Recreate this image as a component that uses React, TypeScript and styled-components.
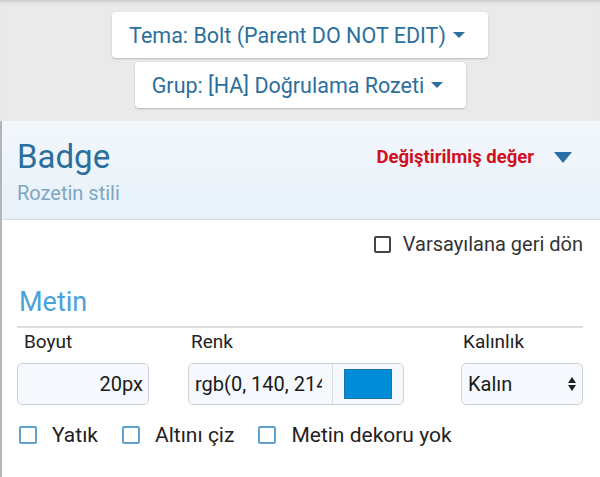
import React from 'react';
import styled, { createGlobalStyle } from 'styled-components';

const GlobalStyle = createGlobalStyle`
  html, body {
    margin: 0;
    padding: 0;
    background: #fff;
  }
  body {
    font-family: Roboto, "Noto Sans", sans-serif;
    width: 600px;
    height: 477px;
    overflow: hidden;
  }
`;

const Page = styled.div`
  width: 600px;
  height: 477px;
  display: flex;
  flex-direction: column;
`;

const TopBar = styled.div`
  background: #eaeaea;
  box-shadow: inset 0 4px 4px -3px rgba(0, 0, 0, 0.18);
  display: flex;
  flex-direction: column;
  align-items: center;
  gap: 4px;
  padding: 12px 0 13px;
`;

const MenuButton = styled.button<{ $shift: number }>`
  display: flex;
  align-items: center;
  gap: 7px;
  height: 46px;
  padding: 0 23px 0 17px;
  margin-left: ${p => p.$shift}px;
  background: #fff;
  border: none;
  border-radius: 4px;
  box-shadow: 0 1px 2px rgba(0, 0, 0, 0.22);
  font-family: Roboto, sans-serif;
  font-size: 21.5px;
  color: #2d6f9c;
`;

const Caret = styled.span<{ $w: number; $h: number; $color: string }>`
  width: 0;
  height: 0;
  border-left: ${p => p.$w / 2}px solid transparent;
  border-right: ${p => p.$w / 2}px solid transparent;
  border-top: ${p => p.$h}px solid ${p => p.$color};
`;

const Panel = styled.div`
  flex: 1;
  border-left: 2px solid #b5b5b5;
  display: flex;
  flex-direction: column;
`;

const Header = styled.div`
  display: flex;
  justify-content: space-between;
  align-items: flex-start;
  padding: 16px 28px 14px 15px;
  background: linear-gradient(#f2f7fc, #e8f1f9);
  border-bottom: 1px solid #d6dde3;
`;

const TitleBlock = styled.div`
  display: flex;
  flex-direction: column;
`;

const Title = styled.div`
  font-size: 33px;
  line-height: 40px;
  color: #2b6f9f;
`;

const Subtitle = styled.div`
  font-size: 20px;
  line-height: 24px;
  margin-top: 4px;
  color: #7ea6c3;
`;

const Modified = styled.div`
  display: flex;
  align-items: center;
  gap: 20px;
  margin-top: 9px;
  font-size: 18.5px;
  line-height: 22px;
  font-weight: 700;
  color: #d0101c;
`;

const Body = styled.div`
  padding: 12px 17px 0 15px;
  display: flex;
  flex-direction: column;
`;

const ResetRow = styled.label`
  align-self: flex-end;
  display: flex;
  align-items: center;
  gap: 12px;
  font-size: 20px;
  line-height: 24px;
  color: #333;
`;

const Box = styled.span<{ $color: string; $size: number }>`
  width: ${p => p.$size}px;
  height: ${p => p.$size}px;
  box-sizing: border-box;
  border: 2px solid ${p => p.$color};
  border-radius: 2px;
  background: #fff;
`;

const SectionTitle = styled.div`
  margin-top: 28px;
  padding: 0 0 6px 2px;
  font-size: 27px;
  line-height: 36px;
  color: #4aa2dc;
  border-bottom: 2px solid #dcdcdc;
`;

const FieldGrid = styled.div`
  display: grid;
  grid-template-columns: 132px 216px 1fr;
  column-gap: 39px;
  margin-top: 3px;
`;

const Field = styled.div<{ $width?: number }>`
  display: flex;
  flex-direction: column;
  gap: 10px;
  justify-self: end;
  width: ${p => (p.$width ? `${p.$width}px` : '100%')};
`;

const Label = styled.div<{ $indent: number }>`
  font-size: 19px;
  line-height: 22px;
  padding-left: ${p => p.$indent}px;
  color: #222;
`;

const InputShell = styled.div`
  height: 42px;
  box-sizing: border-box;
  display: flex;
  align-items: center;
  background: #f5f9fd;
  border: 1px solid #cfd3d7;
  border-radius: 5px;
  font-size: 20px;
  color: #1a1a1a;
  overflow: hidden;
`;

const TextInput = styled.input<{ $align: 'left' | 'right'; $width?: number }>`
  ${p => (p.$width ? `width: ${p.$width}px; flex: none;` : 'flex: 1; min-width: 0;')}
  height: 100%;
  box-sizing: border-box;
  padding: ${p => (p.$align === 'right' ? '0 5px 0 6px' : '0 10px 0 6px')};
  border: none;
  background: transparent;
  font-family: Roboto, sans-serif;
  font-size: 20px;
  color: #1a1a1a;
  text-align: ${p => p.$align};
  outline: none;
`;

const SwatchCell = styled.div`
  flex: 1;
  height: 100%;
  display: flex;
  align-items: center;
  justify-content: center;
  border-left: 1px solid #dadde0;
`;

const Swatch = styled.div<{ $color: string }>`
  width: 48px;
  height: 30px;
  background: ${p => p.$color};
  border: 1px solid #1a72ad;
  box-sizing: border-box;
`;

const SelectText = styled.div`
  flex: 1;
  padding-left: 6px;
`;

const UpDown = styled.div`
  display: flex;
  flex-direction: column;
  gap: 2px;
  margin-right: 6px;
`;

const Tri = styled.span<{ $up?: boolean }>`
  width: 0;
  height: 0;
  border-left: 4px solid transparent;
  border-right: 4px solid transparent;
  ${p => (p.$up ? 'border-bottom: 6px solid #222;' : 'border-top: 6px solid #222;')}
`;

const OptionRow = styled.div`
  display: flex;
  align-items: center;
  margin-top: 18px;
  padding-left: 2px;
  gap: 24px;
  font-size: 21px;
  line-height: 24px;
  color: #222;
`;

const Option = styled.label`
  display: flex;
  align-items: center;
  gap: 15px;
`;

export default function App() {
  const color = 'rgb(0, 140, 214)';
  return (
    <Page>
      <GlobalStyle />
      <TopBar>
        <MenuButton $shift={0}>
          Tema: Bolt (Parent DO NOT EDIT)
          <Caret $w={12} $h={6} $color="#2d6f9c" />
        </MenuButton>
        <MenuButton $shift={1}>
          Grup: [HA] Doğrulama Rozeti
          <Caret $w={12} $h={6} $color="#2d6f9c" />
        </MenuButton>
      </TopBar>
      <Panel>
        <Header>
          <TitleBlock>
            <Title>Badge</Title>
            <Subtitle>Rozetin stili</Subtitle>
          </TitleBlock>
          <Modified>
            Değiştirilmiş değer
            <Caret $w={19} $h={11} $color="#2a6ea8" />
          </Modified>
        </Header>
        <Body>
          <ResetRow>
            <Box $color="#444" $size={17} />
            Varsayılana geri dön
          </ResetRow>
          <SectionTitle>Metin</SectionTitle>
          <FieldGrid>
            <Field>
              <Label $indent={7}>Boyut</Label>
              <InputShell>
                <TextInput $align="right" readOnly value="20px" />
              </InputShell>
            </Field>
            <Field>
              <Label $indent={3}>Renk</Label>
              <InputShell>
                <TextInput $align="left" $width={143} readOnly value={color} />
                <SwatchCell>
                  <Swatch $color={color} />
                </SwatchCell>
              </InputShell>
            </Field>
            <Field $width={122}>
              <Label $indent={2}>Kalınlık</Label>
              <InputShell>
                <SelectText>Kalın</SelectText>
                <UpDown>
                  <Tri $up />
                  <Tri />
                </UpDown>
              </InputShell>
            </Field>
          </FieldGrid>
          <OptionRow>
            <Option><Box $color="#5fa2d2" $size={18} />Yatık</Option>
            <Option><Box $color="#5fa2d2" $size={18} />Altını çiz</Option>
            <Option><Box $color="#5fa2d2" $size={18} />Metin dekoru yok</Option>
          </OptionRow>
        </Body>
      </Panel>
    </Page>
  );
}
